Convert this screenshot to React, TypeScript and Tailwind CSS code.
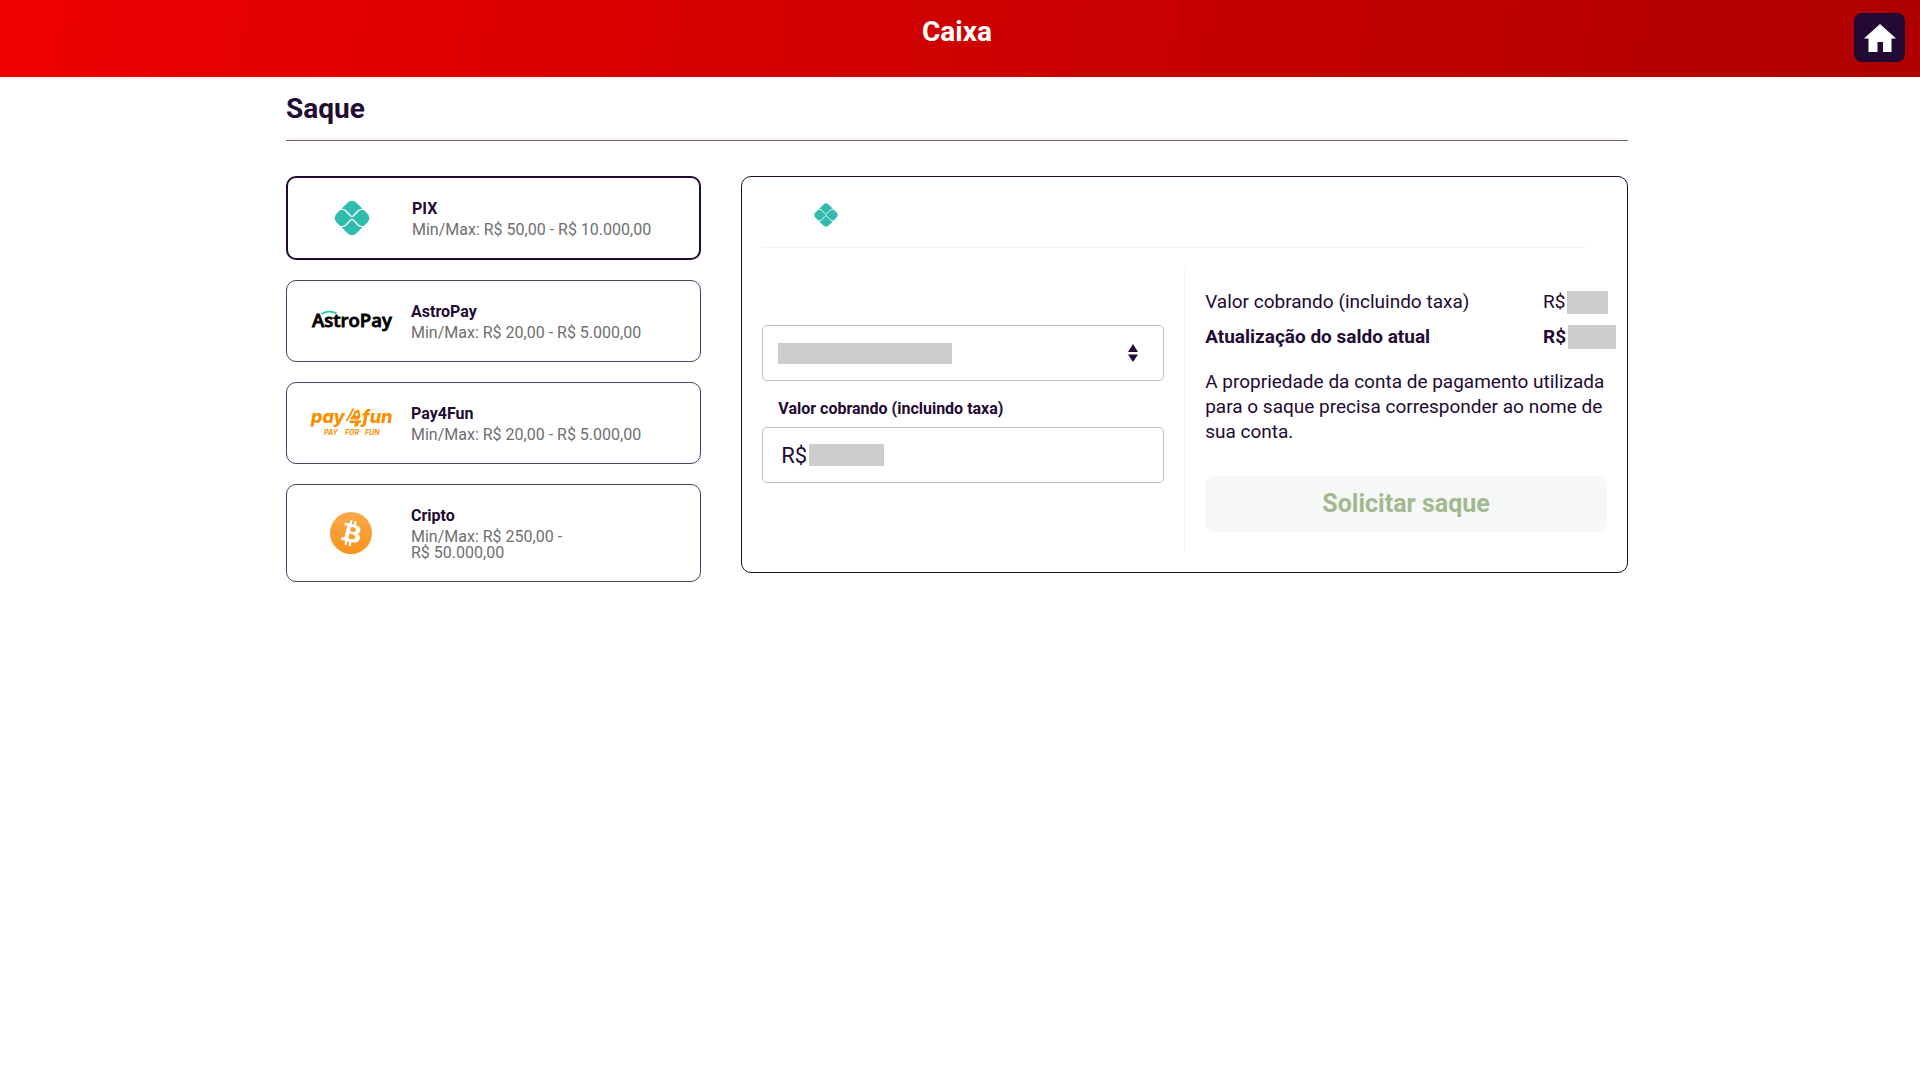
import { ReactNode, useState } from 'react'

function LogoPix({ className = '' }: { className?: string }) {
  return (
    <svg viewBox="0 0 36 36" className={className} aria-hidden="true">
      <rect x="4" y="4" width="28" height="28" rx="6" transform="rotate(45 18 18)" fill="#32bcad" />
      <g fill="none" stroke="#fff" strokeWidth="1.3">
        <path d="M5 9.4H8.2C9.8 9.4 11 10 12 11L16.4 15.8C17.4 16.9 18.6 16.9 19.6 15.8L24 11C25 10 26.2 9.4 27.8 9.4H31" />
        <path d="M5 26.6H8.2C9.8 26.6 11 26 12 25L16.4 20.2C17.4 19.1 18.6 19.1 19.6 20.2L24 25C25 26 26.2 26.6 27.8 26.6H31" />
      </g>
    </svg>
  )
}

function LogoAstroPay() {
  return (
    <svg viewBox="0 0 84 32" className="h-8 w-[84px] overflow-visible" aria-hidden="true">
      <text x="3" y="22" fontSize="18.5" className="font-['Open_Sans'] font-semibold" stroke="#000" strokeWidth="0.8">
        AstroPay
      </text>
      <path d="M12 9.5C16 5.2 23 5 28 8" fill="none" stroke="#fff" strokeWidth="4" />
      <path d="M12.5 9C16 6.2 23 5.8 27.5 8.4" fill="none" stroke="#1fd1a5" strokeWidth="1.8" />
    </svg>
  )
}

function LogoPay4Fun() {
  return (
    <svg viewBox="0 0 84 32" className="h-8 w-[84px] overflow-visible" fill="#f78f00" aria-hidden="true">
      <g fontSize="18" className="font-[Inter] font-extrabold italic">
        <text x="2" y="16">pay</text>
        <text x="53" y="16">fun</text>
      </g>
      <path d="M36.5 14L43.5 1.5H45.5L38.5 14Z" />
      <path d="M45.5 4L50 2.5L51.5 9.5L49.5 12.5H42L41 11L44 8.5Z" />
      <path d="M40.5 13.5H52V16H50L48.5 19.5H45L46 16H40.5Z" />
      <path d="M46.5 6.5L48.5 5.5L49 8L47 9.5Z" fill="#fff" />
      <g fontSize="7" className="font-[Inter] font-bold italic">
        <text x="15" y="28">PAY</text>
        <text x="36" y="28">FOR</text>
        <text x="56" y="28">FUN</text>
      </g>
    </svg>
  )
}

function LogoBitcoin() {
  return (
    <svg viewBox="0 0 32 32" className="size-[42px]" aria-hidden="true">
      <defs>
        <linearGradient id="btc" x1="0" y1="0" x2="0" y2="1">
          <stop offset="0" stopColor="#f9aa4b" />
          <stop offset="1" stopColor="#f7931a" />
        </linearGradient>
      </defs>
      <circle cx="16" cy="16" r="16" fill="url(#btc)" />
      <path
        fill="#fff"
        d="M23.189 14.02c.314-2.096-1.283-3.223-3.465-3.975l.708-2.84-1.728-.43-.69 2.765c-.454-.114-.92-.22-1.385-.326l.695-2.783L15.596 6l-.708 2.839c-.376-.086-.746-.17-1.104-.26l.002-.009-2.384-.595-.46 1.846s1.283.294 1.256.312c.7.175.826.638.805 1.006l-.806 3.235c.048.012.11.03.18.057l-.183-.045-1.13 4.532c-.086.212-.303.531-.793.41.018.025-1.256-.313-1.256-.313l-.858 1.978 2.25.561c.418.105.828.215 1.231.318l-.715 2.872 1.727.43.708-2.84c.472.127.93.245 1.378.357l-.706 2.828 1.728.43.715-2.866c2.948.558 5.164.333 6.097-2.333.752-2.146-.037-3.385-1.588-4.192 1.13-.26 1.98-1.003 2.207-2.538zm-3.95 5.538c-.533 2.147-4.148.986-5.32.695l.95-3.805c1.172.293 4.929.872 4.37 3.11zm.535-5.569c-.487 1.953-3.495.96-4.47.717l.86-3.45c.975.243 4.118.696 3.61 2.733z"
      />
    </svg>
  )
}

interface Metodo {
  id: string
  nome: string
  limites: string
  logo: ReactNode
}

const metodos: Metodo[] = [
  { id: 'pix', nome: 'PIX', limites: 'R$ 50,00 - R$\u00a010.000,00', logo: <LogoPix className="size-9" /> },
  { id: 'astropay', nome: 'AstroPay', limites: 'R$ 20,00 - R$\u00a05.000,00', logo: <LogoAstroPay /> },
  { id: 'pay4fun', nome: 'Pay4Fun', limites: 'R$ 20,00 - R$\u00a05.000,00', logo: <LogoPay4Fun /> },
  { id: 'cripto', nome: 'Cripto', limites: 'R$ 250,00 - R$\u00a050.000,00', logo: <LogoBitcoin /> },
]

interface CartaoMetodoProps {
  metodo: Metodo
  ativo: boolean
  onSelecionar: () => void
}

function CartaoMetodo({ metodo, ativo, onSelecionar }: CartaoMetodoProps) {
  return (
    <button
      type="button"
      aria-pressed={ativo}
      onClick={onSelecionar}
      className={`flex w-full items-center rounded-[10px] pt-[19px] pr-10 pb-5 pl-5 text-left ${
        ativo ? 'border-2 border-[#220a33]' : 'border border-[#553c68]'
      }`}
    >
      <span className="flex w-[88px] shrink-0 justify-center">{metodo.logo}</span>
      <span className="ml-4 block max-w-[244px]">
        <span className="mb-px block text-base leading-6 font-bold">{metodo.nome}</span>
        <span className="block text-base leading-4 text-[#6f6f6f]">Min/Max: {metodo.limites}</span>
      </span>
    </button>
  )
}

export default function App() {
  const [selecionado, setSelecionado] = useState('pix')

  return (
    <div className="min-h-screen bg-white font-[Roboto,sans-serif] text-[#220a33]">
      <header className="relative bg-linear-100 from-[#ee0000] to-[#ae0000] pt-4 pr-1.5 pb-[29px] text-center">
        <h1 className="text-[28px] leading-8 font-bold text-white">Caixa</h1>
        <a
          href="#"
          aria-label="Início"
          className="absolute top-[13px] right-[15px] flex h-[49px] w-[51px] items-center justify-center rounded-lg bg-[#220a33]"
        >
          <svg viewBox="0 0 32 28" className="h-7 w-8" fill="#fff" aria-hidden="true">
            <path d="M16 0L32 14.5H27.5V28H19V18H13.5V28H4.5V14.5H0Z" />
          </svg>
        </a>
      </header>

      <main className="pr-1.5">
        <div className="mx-auto w-[70vw] max-w-[1342px]">
          <h2 className="border-b border-[#7b5a94] pt-4 pb-[15px] text-[28px] leading-8 font-bold">Saque</h2>

          <div className="mt-[35px] grid grid-cols-[415fr_886fr] items-start gap-10">
            {/* Métodos de pagamento */}
            <div className="flex flex-col gap-5">
              {metodos.map((metodo) => (
                <CartaoMetodo
                  key={metodo.id}
                  metodo={metodo}
                  ativo={metodo.id === selecionado}
                  onSelecionar={() => setSelecionado(metodo.id)}
                />
              ))}
            </div>

            {/* Formulário de saque */}
            <form className="rounded-[10px] border border-[#220a33] p-5">
              <div className="mr-5 border-b border-gray-100 pt-1.5 pb-5 pl-12">
                <LogoPix className="ml-1 size-6" />
              </div>

              <div className="mt-5 flex">
                <div className="flex flex-1 flex-col border-r border-gray-100 pt-[57px] pr-5 pb-[68px]">
                  <div className="relative">
                    <select
                      aria-label="Conta"
                      className="block h-14 w-full appearance-none rounded-[5px] border border-[#bdbdbd] bg-white px-4"
                    />
                    <span className="pointer-events-none absolute inset-y-0 left-4 flex items-center">
                      <span className="h-[21px] w-[174px] bg-[#cdcdcd]" />
                    </span>
                    <svg
                      viewBox="0 0 10 18"
                      className="pointer-events-none absolute inset-y-0 right-[26px] my-auto h-[18px] w-2.5"
                      fill="#220a33"
                      aria-hidden="true"
                    >
                      <path d="M5 0L10 8H0ZM5 18L0 10.5H10Z" />
                    </svg>
                  </div>

                  <label htmlFor="valor" className="mt-4 mb-1.5 pl-4 text-base leading-6 font-bold">
                    Valor cobrando (incluindo taxa)
                  </label>
                  <div className="relative">
                    <input
                      id="valor"
                      type="text"
                      defaultValue="R$"
                      className="block h-14 w-full rounded-[5px] border border-[#bdbdbd] bg-white px-[18px] text-[22px]"
                    />
                    <span className="pointer-events-none absolute inset-y-0 left-[47px] flex items-center">
                      <span className="h-[22px] w-[75px] bg-[#cdcdcd]" />
                    </span>
                  </div>
                </div>

                <div className="flex flex-1 flex-col pt-[22px] pb-5 pl-5">
                  <div className="flex h-6 items-center justify-between text-[19px]">
                    <span>Valor cobrando (incluindo taxa)</span>
                    <span className="flex w-16 items-center gap-0.5">
                      R$
                      <span className="h-[23px] w-[41px] shrink-0 bg-[#cdcdcd]" />
                    </span>
                  </div>
                  <div className="mt-[11px] flex h-6 items-center justify-between text-[19px] font-bold">
                    <span>Atualização do saldo atual</span>
                    <span className="flex w-16 items-center gap-0.5">
                      R$
                      <span className="h-6 w-12 shrink-0 bg-[#cdcdcd]" />
                    </span>
                  </div>
                  <p className="mt-5 text-[19px] leading-[25px]">
                    A propriedade da conta de pagamento utilizada para o saque precisa corresponder ao nome de sua
                    conta.
                  </p>
                  <button
                    type="button"
                    disabled
                    className="mt-8 h-14 rounded-[10px] bg-[#f5f8f6] text-[25px] font-bold text-[#a2b890]"
                  >
                    Solicitar saque
                  </button>
                </div>
              </div>
            </form>
          </div>
        </div>
      </main>
    </div>
  )
}
